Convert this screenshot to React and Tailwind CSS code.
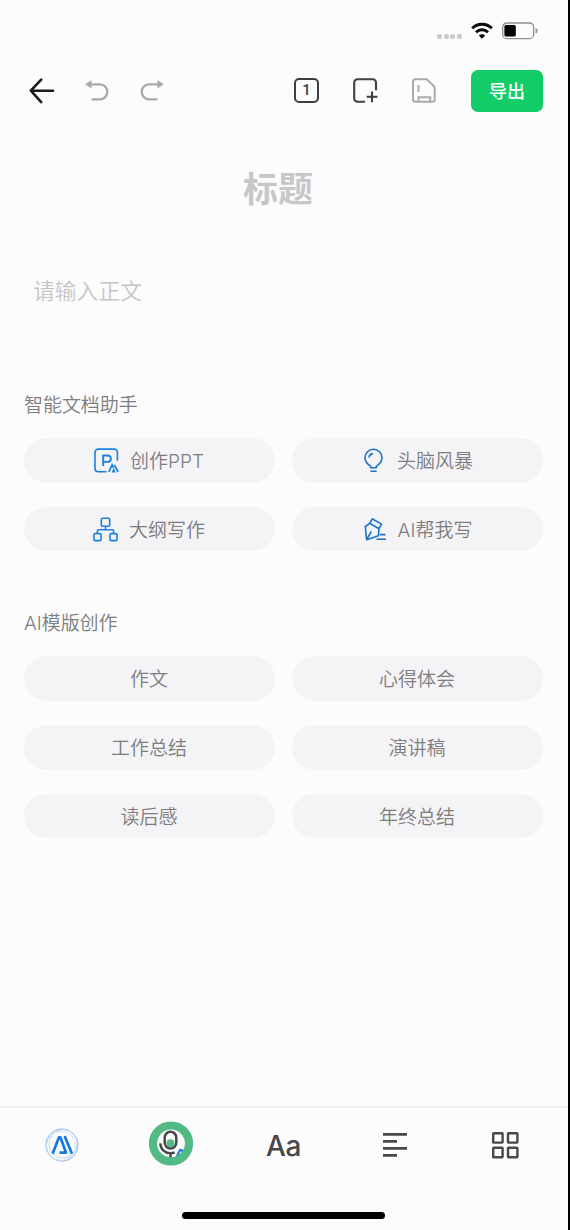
import { clsx } from 'clsx'

function WifiIcon() {
  return (
    <svg width="22" height="17" viewBox="0 0 22 17" fill="none" stroke="#0a0a0a" strokeWidth="3">
      <path d="M1.2 6.2a14 14 0 0 1 19.6 0" />
      <path d="M5 10.2a8.6 8.6 0 0 1 12 0" />
      <path d="M11 16.8 7.8 13.6a4.6 4.6 0 0 1 6.4 0Z" fill="#0a0a0a" stroke="none" />
    </svg>
  )
}

function BatteryIcon() {
  return (
    <svg width="36" height="18" viewBox="0 0 36 18" fill="none">
      <rect x="0.7" y="1" width="31" height="15.6" rx="4.2" stroke="#8f8f91" strokeWidth="1.3" />
      <rect x="2.4" y="3" width="11.4" height="11.6" rx="1.6" fill="#000" />
      <path d="M33.6 6v5.6c1.2-.4 1.9-1.5 1.9-2.8s-.7-2.400-1.900-2.800Z" fill="#8f8f91" />
    </svg>
  )
}

function BackIcon() {
  return (
    <svg width="26" height="26" viewBox="0 0 26 26" fill="none" stroke="#1c1c1e" strokeWidth="2.6" strokeLinecap="round" strokeLinejoin="round">
      <path d="M24 12.700H2M12.200 1.600 1.800 12.700l10.400 11.400" />
    </svg>
  )
}

function UndoIcon({ flip }) {
  return (
    <svg width="24" height="22" viewBox="0 0 24 22" className={clsx(flip && '-scale-x-100')} fill="none" stroke="#a9a9ab" strokeWidth="2.3">
      <path d="M5 4.300h10a7.300 7.500 0 0 1 0 15H6.500" />
      <path d="M6.500.2v8.200L.2 4.300Z" fill="#a9a9ab" stroke="none" />
    </svg>
  )
}

function PageIcon() {
  return (
    <div className="flex h-[25px] w-[25px] items-center justify-center rounded-[5px] border-2 border-[#3f3f42]">
      <span className="font-[Roboto,sans-serif] text-[15px] leading-none font-medium text-[#3f3f42]">1</span>
    </div>
  )
}

function AddPageIcon() {
  return (
    <svg width="25" height="25" viewBox="0 0 25 25" fill="none" stroke="#3f3f42" strokeWidth="2.1">
      <path d="M12 23.700H4.500a3.300 3.300 0 0 1-3.300-3.300V4.500a3.300 3.300 0 0 1 3.300-3.300h15.200a3.300 3.300 0 0 1 3.300 3.300v7.700" />
      <path d="M19 13.400v10.800M13.600 18.800h10.900" />
    </svg>
  )
}

function SaveIcon() {
  return (
    <svg width="24" height="25" viewBox="0 0 24 25" fill="none" stroke="#aaaaac" strokeWidth="2">
      <path d="M3.500 1.200h11.200l8 7.800v12.200a2.600 2.600 0 0 1-2.600 2.600H3.600A2.600 2.600 0 0 1 1 21.200V3.800a2.600 2.600 0 0 1 2.500-2.600Z" />
      <path d="M6.500 7v7M6.500 23.500v-4.200h11.700v4.200" />
    </svg>
  )
}

function PptIcon() {
  return (
    <svg width="25" height="25" viewBox="0 0 25 25" fill="none" stroke="#1a80df" strokeWidth="1.600">
      <path d="M12.500 23.700H4.200A3.200 3.200 0 0 1 1 20.500V4.300a3.200 3.200 0 0 1 3.200-3.200h16a3.200 3.200 0 0 1 3.200 3.200v8.500" />
      <path d="M9.200 18V7.500h4.500a3.200 3.200 0 0 1 0 6.400H9.200" strokeWidth="1.900" />
      <path d="m14.800 24 3.300-7.200 1.400 3.200M18 23.700h2.300l-.8-3M20.300 16.800l3.900 7.200" strokeWidth="1.700" />
    </svg>
  )
}

function OutlineIcon() {
  return (
    <svg width="25" height="25" viewBox="0 0 25 25" fill="none" stroke="#1a80df" strokeWidth="1.600">
      <rect x="8.300" y="1.300" width="8.400" height="8" rx="1.200" />
      <rect x="1" y="16.600" width="7" height="7" rx="1.200" />
      <rect x="17" y="16.600" width="7" height="7" rx="1.200" />
      <path d="M12.500 9.300v3.500M4.400 16.600v-2.500a1.300 1.300 0 0 1 1.300-1.300h13.600a1.300 1.300 0 0 1 1.300 1.300v2.500" />
    </svg>
  )
}

function BulbIcon() {
  return (
    <svg width="25" height="25" viewBox="0 0 25 25" fill="none" stroke="#1a73c9" strokeWidth="1.600" strokeLinejoin="round">
      <path d="M9.600 19.800v-1.700C7 16.500 4 13.800 4 9.800a8.500 8.500 0 0 1 17 0c0 4-3 6.700-5.600 8.300v1.700Z" />
      <path d="M8 9.500a4.500 4.500 0 0 1 3.800-3.900M9.500 23.300h6.200" />
    </svg>
  )
}

function PenIcon() {
  return (
    <svg width="25" height="25" viewBox="0 0 25 25" fill="none" stroke="#1a73c9" strokeWidth="1.600" strokeLinejoin="round">
      <path d="m10.200 1.800 9.300 5.300-2.500 4.600L7.700 6.300ZM7.700 6.300 3.300 9.500l1.300 13.200 11.800-4 .6-7M4.600 22.700l4.700-8.200" />
      <path d="M18 17.600h5.500M14.500 22.300H24" />
    </svg>
  )
}

function AiLogo() {
  return (
    <svg width="34" height="34" viewBox="0 0 34 34" fill="none">
      <circle cx="17" cy="17" r="16.100" stroke="#7fa9d8" strokeWidth="0.900" />
      <circle cx="18.200" cy="15.800" r="14.200" stroke="#b8d3ef" strokeWidth="0.900" />
      <circle cx="16" cy="18" r="14.600" stroke="#c9ddf2" strokeWidth="0.800" />
      <g stroke="#1478e0" strokeWidth="2.700" strokeLinejoin="round">
        <path d="M7.600 25.800 14 9.300h1.400l5.600 15.300h-6.500" />
        <path d="m19.600 8 7.400 17.800" />
      </g>
    </svg>
  )
}

function MicIcon() {
  return (
    <svg width="46" height="46" viewBox="0 0 46 46" fill="none">
      <circle cx="23" cy="22.500" r="15" fill="#fcfcfc" />
      <path d="M28.500 36.500 32 29l1.800.2 3.200 7M36 28.500l3 6" stroke="#1f7bdc" strokeWidth="2.200" />
      <circle cx="23" cy="22.500" r="18" stroke="#52ba85" strokeWidth="8.200" />
      <rect x="16.700" y="10.800" width="11.600" height="16.800" rx="5.800" stroke="#48484b" strokeWidth="2.500" />
      <circle cx="22.500" cy="22.300" r="4" fill="#52ba85" />
      <path d="M12.300 22.300c.4 6.200 4.700 9.900 10.200 9.900 1.500 0 2.900-.3 4.200-.9M22.500 32v4.500" stroke="#48484b" strokeWidth="2.500" />
    </svg>
  )
}

function AlignIcon() {
  return (
    <svg width="24" height="24" viewBox="0 0 24 24" stroke="#48484b" strokeWidth="2.800">
      <path d="M0 1.400h24M0 8.400h14M0 15.400h24M0 22.400h14" />
    </svg>
  )
}

function GridIcon() {
  return (
    <svg width="27" height="27" viewBox="0 0 27 27" fill="none" stroke="#48484b" strokeWidth="2.400" strokeLinejoin="round">
      <rect x="1.200" y="1.200" width="9.400" height="9.400" rx=".5" />
      <rect x="16" y="1.200" width="9.400" height="9.400" rx=".5" />
      <rect x="1.200" y="15.800" width="9.400" height="9.400" rx=".5" />
      <rect x="16" y="15.800" width="9.400" height="9.400" rx=".5" />
    </svg>
  )
}

const helpers = [
  { label: '创作PPT', icon: PptIcon },
  { label: '头脑风暴', icon: BulbIcon },
  { label: '大纲写作', icon: OutlineIcon },
  { label: 'AI帮我写', icon: PenIcon },
]

const templates = ['作文', '心得体会', '工作总结', '演讲稿', '读后感', '年终总结']

function Section({ title, items, className }) {
  return (
    <section className={className}>
      <h2 className="text-[19px] leading-7 font-[350] tracking-[-0.05px] text-[#7d7d80]">{title}</h2>
      <div className="mt-[18px] grid grid-cols-2 gap-x-[17px] gap-y-6">
        {items.map(({ label, icon: Icon }) => (
          <button
            key={label}
            type="button"
            className="flex h-[44.700px] items-center justify-center gap-[11px] rounded-full bg-[#f4f3f6] pr-px text-[19px] leading-7 font-[350] text-[#7d7d80]"
          >
            {Icon && <Icon />}
            <span className="pt-[3px]">{label}</span>
          </button>
        ))}
      </div>
    </section>
  )
}

export default function App() {
  return (
    <div className="flex h-[1230px] w-[570px] flex-col border-r-2 border-black bg-[#fcfcfc] font-[Inter,'Noto_Sans_CJK_SC',sans-serif]">
      {/* Status bar */}
      <div className="flex h-[61px] items-center justify-end pr-[30px]">
        <div className="mt-3 mr-[9px] flex gap-[1.700px]">
          {[0, 1, 2, 3].map(i => (
            <span key={i} className="h-[5px] w-[5px] rounded-[2px] bg-[#cacacc]" />
          ))}
        </div>
        <WifiIcon />
        <div className="ml-[9px]"><BatteryIcon /></div>
      </div>

      {/* Toolbar */}
      <header className="flex h-[60px] items-center pr-[25px] pl-[29px]">
        <BackIcon />
        <div className="ml-[30px] flex gap-[31px]">
          <UndoIcon />
          <UndoIcon flip />
        </div>
        <div className="ml-auto flex items-center">
          <div className="mr-[35px] mb-px flex items-center gap-[34px]">
            <PageIcon />
            <AddPageIcon />
            <SaveIcon />
          </div>
          <button type="button" className="h-[42px] w-[72px] rounded-[7px] bg-[#12cc68] pt-px text-[18px] font-medium text-white">
            导出
          </button>
        </div>
      </header>

      {/* Editor */}
      <main className="flex-1 pr-[25px] pl-6">
        <h1 className="mt-[43px] pr-[11px] text-center text-[35px] leading-[50px] font-bold text-[#c7c7c9]">标题</h1>
        <p className="mt-[61px] ml-[9px] text-[21.800px] leading-8 font-[350] text-[#c6c6c9]">请输入正文</p>

        <Section title="智能文档助手" items={helpers} className="mt-[85px]" />
        <Section title="AI模版创作" items={templates.map(label => ({ label }))} className="mt-[59px]" />
      </main>

      {/* Bottom bar */}
      <footer className="flex h-[124px] flex-col border-t-2 border-[#f0f0f1]">
        <nav className="grid h-[74px] grid-cols-5 place-items-center pr-[7px] pl-[6px]">
          <AiLogo />
          <div className="pr-1 pb-[2px]"><MicIcon /></div>
          <span className="pt-[2px] text-[28px] leading-none font-medium tracking-[-0.5px] text-[#48484b]">Aa</span>
          <AlignIcon />
          <GridIcon />
        </nav>
        <div className="mt-auto mb-[11px] ml-[182px] h-[7px] w-[203px] rounded-full bg-black" />
      </footer>
    </div>
  )
}
